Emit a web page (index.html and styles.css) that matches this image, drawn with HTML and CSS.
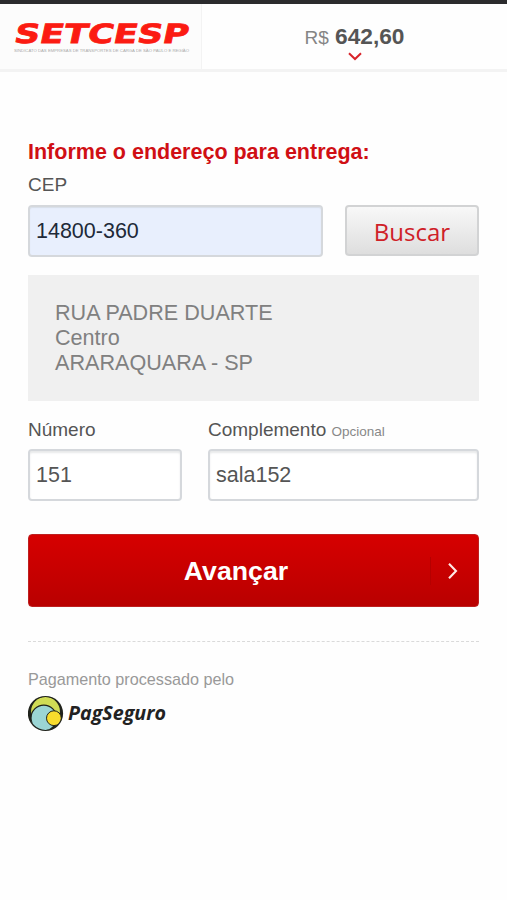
FILE: index.html
```html
<!DOCTYPE html>
<html lang="pt-BR">

<head>
    <meta charset="UTF-8">
    <meta name="viewport" content="width=device-width, initial-scale=1.0">
    <title>SETCESP - Endereço para entrega</title>
    <link rel="stylesheet" href="styles.css">
</head>

<body>
    <header class="header">
        <div class="logo">
            <svg width="200" height="64" viewBox="0 0 200 64" role="img" aria-label="SETCESP">
                <text class="logo-name" transform="translate(13 38.9) skewX(-12)" x="0" y="0" textLength="174" lengthAdjust="spacingAndGlyphs">SETCESP</text>
                <text class="logo-tagline" x="14" y="47.5" textLength="175" lengthAdjust="spacingAndGlyphs">SINDICATO DAS EMPRESAS DE TRANSPORTES DE CARGA DE SÃO PAULO E REGIÃO</text>
            </svg>
        </div>
        <div class="total">
            <div class="total-value"><span class="currency">R$</span> <strong>642,60</strong></div>
            <svg class="total-arrow" width="14" height="9" viewBox="0 0 14 9">
                <path d="M1 1.2 L7 7 L13 1.2" fill="none" stroke="#d8232a" stroke-width="2" />
            </svg>
        </div>
    </header>

    <main class="content">
        <h1>Informe o endereço para entrega:</h1>

        <form>
            <label for="cep">CEP</label>
            <div class="cep-row">
                <input class="autofilled" type="text" id="cep" value="14800-360">
                <button type="button" class="btn-search">Buscar</button>
            </div>

            <div class="address">
                RUA PADRE DUARTE<br>
                Centro<br>
                ARARAQUARA - SP
            </div>

            <div class="details-row">
                <div class="field">
                    <label for="numero">Número</label>
                    <input type="text" id="numero" value="151">
                </div>
                <div class="field">
                    <label for="complemento">Complemento <small>Opcional</small></label>
                    <input type="text" id="complemento" value="sala152">
                </div>
            </div>

            <button type="button" class="btn-next">
                <span class="btn-next-label">Avançar</span>
                <span class="btn-next-arrow">
                    <svg width="10" height="18" viewBox="0 0 10 18">
                        <path d="M1 1.8 L8 9 L1 16.2" fill="none" stroke="#ffe9e5" stroke-width="2.1" />
                    </svg>
                </span>
            </button>
        </form>

        <footer class="footer">
            <p>Pagamento processado pelo</p>
            <svg width="142" height="38" viewBox="0 0 142 38" role="img" aria-label="PagSeguro">
                <defs>
                    <clipPath id="badge">
                        <circle cx="17.5" cy="18.5" r="16.4" />
                    </clipPath>
                </defs>
                <circle cx="17.5" cy="18.5" r="17.6" fill="#20231c" />
                <g clip-path="url(#badge)" stroke="#20231c">
                    <circle cx="17.5" cy="16.5" r="14.4" fill="#d0dc55" stroke="none" />
                    <circle cx="15.8" cy="23" r="12.8" fill="#9bd5d4" stroke-width="1.2" />
                    <circle cx="25.9" cy="23.2" r="7.4" fill="#f7dc2c" stroke-width="1" />
                </g>
                <text class="pagseguro-name" x="40" y="25" textLength="98" lengthAdjust="spacingAndGlyphs">PagSeguro</text>
            </svg>
        </footer>
    </main>
</body>

</html>
```

FILE: styles.css
```css
* {
    box-sizing: border-box;
}

body {
    margin: 0;
    min-height: 900px;
    font-family: "Liberation Sans", Arial, sans-serif;
    color: #555;
    background: #fefefe;
    border-top: 4px solid #2b2b2d;
}

/* header */
.header {
    display: flex;
    height: 68px;
    border-bottom: 3px solid #f3f3f3;
}

.logo {
    width: 202px;
    background: #fcfcfc;
    border-right: 1px solid #f3f3f3;
}

.logo svg,
.footer svg {
    display: block;
}

.logo-name {
    font: bold 26.5px "DejaVu Sans", sans-serif;
    fill: #fb1b12;
    stroke: #fb1b12;
    stroke-width: 0.8;
}

.logo-tagline {
    font: 4px "Liberation Sans", sans-serif;
    fill: #aaa;
}

.total {
    flex: 1;
    display: flex;
    flex-direction: column;
    align-items: center;
    padding-top: 19px;
}

.total-value {
    font-size: 22.7px;
    line-height: 26px;
}

.currency {
    font-size: 19px;
    color: #858585;
}

.total-arrow {
    margin-top: 1px;
}

/* form */
.content {
    padding: 67px 28px 0;
}

h1 {
    margin: 0 0 9px;
    font-size: 21.5px;
    line-height: 26px;
    color: #d00f14;
    white-space: nowrap;
}

label {
    display: block;
    height: 22px;
    margin-bottom: 9px;
    font-size: 19px;
    line-height: 22px;
    white-space: nowrap;
}

label small {
    font-size: 13.5px;
    line-height: 1;
    color: #888;
}

input {
    display: block;
    width: 100%;
    height: 52px;
    padding: 0 6px;
    font-family: inherit;
    font-size: 21.5px;
    color: #555;
    background: #fff;
    border: 2px solid #d5d8dc;
    border-radius: 4px;
    box-shadow: inset 0 2px 2px #e8e9ea;
}

.autofilled {
    color: #202938;
    background: #e8effd;
    box-shadow: inset 0 1px 1px #d8dee8;
}

.cep-row {
    display: grid;
    grid-template-columns: 295px 134px;
    justify-content: space-between;
    align-items: start;
}

.btn-search {
    height: 51px;
    padding: 2px 0 0;
    font-family: "Open Sans", "Noto Sans", sans-serif;
    font-size: 24px;
    line-height: 30px;
    color: #cf2027;
    background: linear-gradient(#f8f8f8, #dedede);
    border: 2px solid #d2d3d4;
    border-radius: 4px;
}

.address {
    height: 126px;
    margin: 18px 0;
    padding: 25px 27px;
    font-size: 21.6px;
    line-height: 25px;
    color: #808080;
    background: #f0f0f0;
}

.details-row {
    display: grid;
    grid-template-columns: 154px 271px;
    justify-content: space-between;
}

.field label {
    margin-bottom: 8px;
}

.btn-next {
    display: flex;
    align-items: center;
    width: 100%;
    height: 73px;
    margin-top: 33px;
    padding: 0;
    font-family: inherit;
    color: #fff;
    background: linear-gradient(#d60000, #b90000);
    border: 1px solid #bd2020;
    border-radius: 4px;
}

.btn-next-label {
    flex: 1;
    padding: 2px 0 0 13px;
    font-size: 26.7px;
    font-weight: bold;
}

.btn-next-arrow {
    display: flex;
    align-items: center;
    width: 48px;
    height: 28px;
    padding-left: 17px;
    border-left: 1px solid #b50000;
}

/* footer */
.footer {
    margin-top: 34px;
    padding-top: 26px;
    border-top: 1px dashed #dadada;
}

.footer p {
    margin: 0 0 5px;
    font-size: 16.2px;
    line-height: 22px;
    color: #999;
}

.pagseguro-name {
    font: italic bold 20px "Open Sans", "Noto Sans", sans-serif;
    fill: #222;
}
```
